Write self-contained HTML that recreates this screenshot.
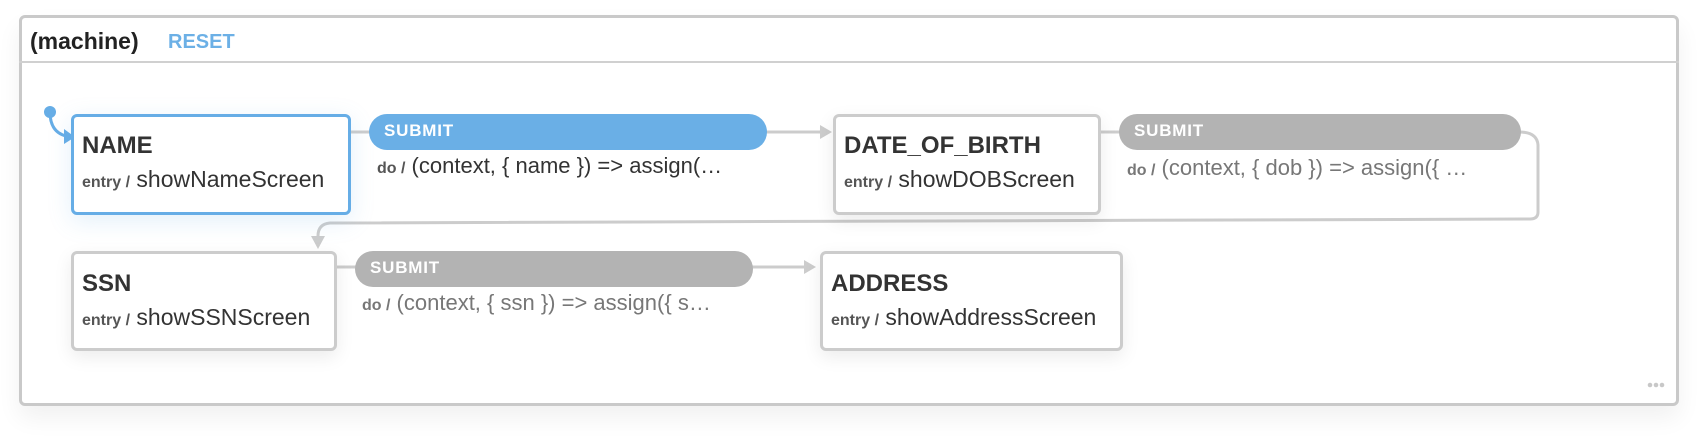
<!DOCTYPE html>
<html><head><meta charset="utf-8"><style>
body{margin:0;width:1698px;height:442px;background:#fff;position:relative;overflow:hidden;font-family:"Liberation Sans",Arial,sans-serif;}
.outer{position:absolute;left:19px;top:15px;width:1654px;height:385px;border:3px solid #c9c9c9;border-radius:6px;box-shadow:0 12px 24px rgba(0,0,0,.06);background:#fff;}
.hdr{position:absolute;left:19px;top:61px;width:1660px;height:2px;background:#d0d0d0;}
.t{position:absolute;white-space:nowrap;}
.box{position:absolute;border:3px solid #ccc;border-radius:6px;background:#fff;box-sizing:border-box;box-shadow:0 6px 18px rgba(0,0,0,.08);}
.box.act{border-color:#66ade6;box-shadow:0 6px 24px rgba(102,173,230,.18);}
.title{position:absolute;left:8px;font-weight:bold;font-size:24px;color:#333;}
.entry{position:absolute;left:8px;font-size:23px;color:#333;white-space:nowrap;}
.entry b,.do b{font-size:16px;color:#555;}
.pill{position:absolute;height:36px;border-radius:18px;box-sizing:border-box;color:#fff;font-weight:bold;font-size:17px;letter-spacing:.8px;padding-left:15px;line-height:34px;}
.do{position:absolute;font-size:22px;color:#333;white-space:nowrap;}
.do.g{color:#777}
.do.g b{color:#777}
</style></head><body>
<div class="outer"></div>
<div class="hdr"></div>
<div class="t" style="left:30px;top:28px;font-size:23px;font-weight:bold;color:#222;">(machine)</div>
<div class="t" style="left:168px;top:31px;font-size:20px;font-weight:bold;color:#6cb0e6;">RESET</div>

<svg style="position:absolute;left:0;top:0" width="1698" height="442">
<g fill="none" stroke="#ccc" stroke-width="3">
<line x1="350" y1="132" x2="372" y2="132"/>
<line x1="766" y1="132" x2="822" y2="132"/>
<line x1="1100" y1="132" x2="1122" y2="132"/>
<path d="M1519 132 Q1537 132 1538 145 L1538 212 Q1538 219 1530 219 L330 223 Q318 224 318 236"/>
<line x1="336" y1="267" x2="358" y2="267"/>
<line x1="752" y1="267" x2="806" y2="267"/>
</g>
<g fill="#ccc">
<polygon points="820,125 832,132 820,139"/>
<polygon points="804,260 816,267 804,274"/>
<polygon points="311,236 318,249 325,236"/>
</g>
<circle cx="50" cy="112" r="6" fill="#66ade6"/>
<path d="M50 112 Q50 132 66 136" fill="none" stroke="#66ade6" stroke-width="3"/>
<polygon points="64,129 75,137 64,144" fill="#66ade6"/>
<g fill="#c8c8c8"><circle cx="1650" cy="385" r="2.3"/><circle cx="1656" cy="385" r="2.3"/><circle cx="1662" cy="385" r="2.3"/></g>
</svg>

<div class="box act" style="left:71px;top:114px;width:280px;height:101px;">
<div class="title" style="top:15px">NAME</div>
<div class="entry" style="top:49px"><b>entry /</b> showNameScreen</div>
</div>
<div class="pill" style="left:369px;top:114px;width:398px;background:#6aafe6;">SUBMIT</div>
<div class="do" style="left:377px;top:153px;"><b>do /</b> (context, { name }) =&gt; assign(…</div>

<div class="box" style="left:833px;top:114px;width:268px;height:101px;">
<div class="title" style="top:15px">DATE_OF_BIRTH</div>
<div class="entry" style="top:49px"><b>entry /</b> showDOBScreen</div>
</div>
<div class="pill" style="left:1119px;top:114px;width:402px;background:#b3b3b3;">SUBMIT</div>
<div class="do g" style="left:1127px;top:155px;"><b>do /</b> (context, { dob }) =&gt; assign({ …</div>

<div class="box" style="left:71px;top:251px;width:266px;height:100px;">
<div class="title" style="top:16px">SSN</div>
<div class="entry" style="top:50px"><b>entry /</b> showSSNScreen</div>
</div>
<div class="pill" style="left:355px;top:251px;width:398px;background:#b3b3b3;">SUBMIT</div>
<div class="do g" style="left:362px;top:290px;"><b>do /</b> (context, { ssn }) =&gt; assign({ s…</div>

<div class="box" style="left:820px;top:251px;width:303px;height:100px;">
<div class="title" style="top:16px">ADDRESS</div>
<div class="entry" style="top:50px"><b>entry /</b> showAddressScreen</div>
</div>
</body></html>
